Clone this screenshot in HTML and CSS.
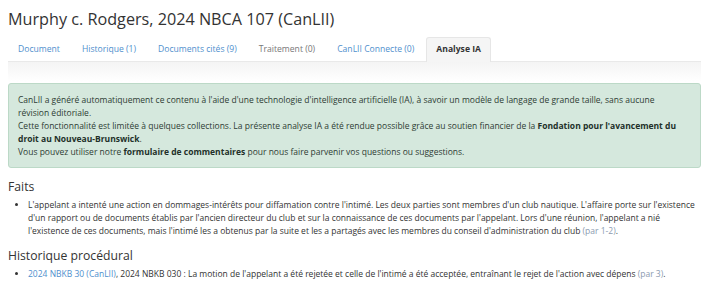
FILE: index.html
```html
<!DOCTYPE html>
<html lang="fr">
<head>
<meta charset="utf-8">
<title>Murphy c. Rodgers, 2024 NBCA 107 (CanLII)</title>
<link rel="stylesheet" href="styles.css">
</head>
<body>
<div class="page">
  <h1 class="title">Murphy c. Rodgers, 2024 NBCA 107 (CanLII)</h1>
  <ul class="tabs">
    <li class="tab"><a href="#">Document</a></li>
    <li class="tab"><a href="#">Historique (1)</a></li>
    <li class="tab"><a href="#">Documents cités (9)</a></li>
    <li class="tab tab-disabled"><span>Traitement (0)</span></li>
    <li class="tab"><a href="#">CanLII Connecte (0)</a></li>
    <li class="tab tab-active"><span>Analyse IA</span></li>
  </ul>
  <div class="tab-content">
    <div class="notice">
      <p>CanLII a généré automatiquement ce contenu à l'aide d'une technologie d'intelligence artificielle (IA), à savoir un modèle de langage de grande taille, sans aucune révision éditoriale.</p>
      <p>Cette fonctionnalité est limitée à quelques collections. La présente analyse IA a été rendue possible grâce au soutien financier de la <strong>Fondation pour l'avancement du</strong> <strong>droit au Nouveau-Brunswick</strong>.</p>
      <p>Vous pouvez utiliser notre <strong>formulaire de commentaires</strong> pour nous faire parvenir vos questions ou suggestions.</p>
    </div>
    <h2 class="section-title">Faits</h2>
    <ul class="items">
      <li>L'appelant a intenté une action en dommages-intérêts pour diffamation contre l'intimé. Les deux parties sont membres d'un club nautique. L'affaire porte sur l'existence d'un rapport ou de documents établis par l'ancien directeur du club et sur la connaissance de ces documents par l'appelant. Lors d'une réunion, l'appelant a nié l'existence de ces documents, mais l'intimé les a obtenus par la suite et les a partagés avec les membres du conseil d'administration du club <a class="par" href="#">(par 1-2)</a>.</li>
    </ul>
    <h2 class="section-title">Historique procédural</h2>
    <ul class="items">
      <li><a class="link" href="#">2024 NBKB 30 (CanLII)</a>, 2024 NBKB 030 : La motion de l'appelant a été rejetée et celle de l'intimé a été acceptée, entraînant le rejet de l'action avec dépens <a class="par" href="#">(par 3)</a>.</li>
    </ul>
  </div>
</div>
</body>
</html>
```

FILE: styles.css
```css
* { box-sizing: border-box; }

body {
  margin: 0;
  background: #ffffff;
  font-family: "Open Sans", "Liberation Sans", sans-serif;
  font-size: 8.5px;
  line-height: 13px;
  color: #333333;
}

.page {
  margin: 0 8px;
}

.title {
  margin: 8px 0 0;
  font-size: 16.2px;
  line-height: 22px;
  font-weight: 400;
  color: #333333;
}

.tabs {
  list-style: none;
  margin: 7px 0 0;
  padding: 0;
  display: flex;
  border-bottom: 1px solid #e9e9e9;
}

.tab {
  margin-right: 2px;
  border: 1px solid transparent;
  border-bottom: none;
  border-radius: 3px 3px 0 0;
}

.tab a,
.tab span {
  display: block;
  padding: 0 9px;
  line-height: 23px;
  font-size: 8.6px;
  text-decoration: none;
  color: #4f8fcd;
}

.tab-disabled span {
  color: #777777;
}

.tab-active {
  background: #f5f5f5;
  border-color: #e6e6e6;
  margin-bottom: -1px;
  padding-bottom: 1px;
}

.tab-active span {
  color: #333333;
  font-weight: 700;
}

.tab-content {
  padding-top: 21px;
  background: linear-gradient(to bottom, #f4f4f4 0, #ffffff 20px);
}

.notice {
  background: #d5e8dd;
  border: 1px solid #bcd9c7;
  border-radius: 3px;
  padding: 9px 13px 9px 9px;
  color: #2e3c34;
}

.notice p {
  margin: 0;
}

.notice strong {
  font-weight: 700;
  color: #223029;
}

.section-title {
  margin: 11px 0 4px;
  font-size: 12.2px;
  line-height: 15px;
  font-weight: 400;
  color: #333333;
}

.items {
  margin: 0;
  padding-left: 20px;
}

.items li {
  margin: 0;
}

.link {
  color: #4f8fcd;
  text-decoration: none;
}

.par {
  color: #8b9bb0;
  text-decoration: none;
}
```
